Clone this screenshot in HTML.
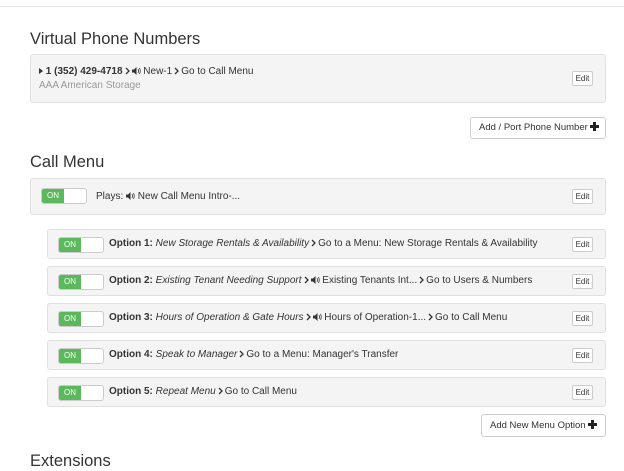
<!DOCTYPE html>
<html><head><meta charset="utf-8"><style>
*{box-sizing:border-box;margin:0;padding:0}
body{width:624px;height:459px;overflow:hidden;background:#fff;font-family:"Liberation Sans",sans-serif;color:#333;position:relative;font-size:10px}
.abs{position:absolute}
.h{position:absolute;left:30px;font-size:16.5px;color:#333}
.box{position:absolute;background:#f4f4f4;border:1px solid #e0e0e0;border-radius:3px}
.edit{position:absolute;right:12px;width:21px;height:15px;border:1px solid #ccc;background:#fff;border-radius:2px;font-size:8px;text-align:center;line-height:13px;color:#333}
.btn{position:absolute;border:1px solid #ccc;background:#fff;border-radius:3px;font-size:9.5px;color:#333;line-height:20px;padding-left:8px;white-space:nowrap}
.tog{position:absolute;width:46px;height:16px;border:1px solid #ccc;border-radius:3px;background:#fff;overflow:hidden}
.tog span{position:absolute;left:0;top:0;width:22px;height:14px;background:#5cb85c;color:#fff;font-size:8px;line-height:14px;text-align:center}
.txt{position:absolute;white-space:nowrap;font-size:10px}
.plus{display:inline-block;position:relative;width:9px;height:9px;vertical-align:-1px;margin-left:2px}
.plus:before{content:"";position:absolute;left:3px;top:0;width:3px;height:9px;background:#222}
.plus:after{content:"";position:absolute;left:0;top:3px;width:9px;height:3px;background:#222}
.spk{display:inline-block;width:9px;height:8px;vertical-align:-1px}
.gt{display:inline-block;width:5px;height:8px;vertical-align:-1px;margin:0 2px}
</style></head><body>
<div class="abs" style="left:0;top:6px;width:624px;height:1px;background:#e6e6e6"></div>
<div class="h" style="top:30px">Virtual Phone Numbers</div>
<div class="box" style="left:30px;top:54px;width:576px;height:49px">
 <div class="txt" style="left:8px;top:11px"><svg width="4" height="6" style="vertical-align:0"><path d="M0 0L4 3L0 6Z" fill="#333"/></svg> <b>1 (352) 429-4718</b><svg class="gt" viewBox="0 0 5 8"><path d="M1 1L4 4L1 7" stroke="#333" stroke-width="1.3" fill="none"/></svg><svg class="spk" viewBox="0 0 9 8"><path d="M0 2.5H2L4.5 0V8L2 5.5H0Z" fill="#333"/><path d="M6 2Q7 4 6 6M7.5 1Q9 4 7.5 7" stroke="#333" stroke-width=".8" fill="none"/></svg> New-1<svg class="gt" viewBox="0 0 5 8"><path d="M1 1L4 4L1 7" stroke="#333" stroke-width="1.3" fill="none"/></svg>Go to Call Menu</div>
 <div class="txt" style="left:8px;top:25px;color:#999">AAA American Storage</div>
 <div class="edit" style="top:16px">Edit</div>
</div>
<div class="btn" style="left:470px;top:117px;width:136px;height:22px">Add / Port Phone Number<span class="plus"></span></div>
<div class="h" style="top:153px">Call Menu</div>
<div class="box" style="left:30px;top:178px;width:576px;height:37px">
 <div class="tog" style="left:10px;top:9px"><span>ON</span></div>
 <div class="txt" style="left:65px;top:12px">Plays: <svg class="spk" viewBox="0 0 9 8"><path d="M0 2.5H2L4.5 0V8L2 5.5H0Z" fill="#333"/><path d="M6 2Q7 4 6 6M7.5 1Q9 4 7.5 7" stroke="#333" stroke-width=".8" fill="none"/></svg> New Call Menu Intro-...</div>
 <div class="edit" style="top:10px">Edit</div>
</div>

<div class="box" style="left:47px;top:229px;width:559px;height:30px">
 <div class="tog" style="left:10px;top:7px"><span>ON</span></div>
 <div class="txt" style="left:61px;top:8px"><b>Option 1:</b> <i>New Storage Rentals &amp; Availability</i><svg class="gt" viewBox="0 0 5 8"><path d="M1 1L4 4L1 7" stroke="#333" stroke-width="1.3" fill="none"/></svg>Go to a Menu: New Storage Rentals &amp; Availability</div>
 <div class="edit" style="top:7px">Edit</div>
</div>
<div class="box" style="left:47px;top:266px;width:559px;height:30px">
 <div class="tog" style="left:10px;top:7px"><span>ON</span></div>
 <div class="txt" style="left:61px;top:8px"><b>Option 2:</b> <i>Existing Tenant Needing Support</i><svg class="gt" viewBox="0 0 5 8"><path d="M1 1L4 4L1 7" stroke="#333" stroke-width="1.3" fill="none"/></svg><svg class="spk" viewBox="0 0 9 8"><path d="M0 2.5H2L4.5 0V8L2 5.5H0Z" fill="#333"/><path d="M6 2Q7 4 6 6M7.5 1Q9 4 7.5 7" stroke="#333" stroke-width=".8" fill="none"/></svg> Existing Tenants Int...<svg class="gt" viewBox="0 0 5 8"><path d="M1 1L4 4L1 7" stroke="#333" stroke-width="1.3" fill="none"/></svg>Go to Users &amp; Numbers</div>
 <div class="edit" style="top:7px">Edit</div>
</div>
<div class="box" style="left:47px;top:303px;width:559px;height:30px">
 <div class="tog" style="left:10px;top:7px"><span>ON</span></div>
 <div class="txt" style="left:61px;top:8px"><b>Option 3:</b> <i>Hours of Operation &amp; Gate Hours</i><svg class="gt" viewBox="0 0 5 8"><path d="M1 1L4 4L1 7" stroke="#333" stroke-width="1.3" fill="none"/></svg><svg class="spk" viewBox="0 0 9 8"><path d="M0 2.5H2L4.5 0V8L2 5.5H0Z" fill="#333"/><path d="M6 2Q7 4 6 6M7.5 1Q9 4 7.5 7" stroke="#333" stroke-width=".8" fill="none"/></svg> Hours of Operation-1...<svg class="gt" viewBox="0 0 5 8"><path d="M1 1L4 4L1 7" stroke="#333" stroke-width="1.3" fill="none"/></svg>Go to Call Menu</div>
 <div class="edit" style="top:7px">Edit</div>
</div>
<div class="box" style="left:47px;top:340px;width:559px;height:30px">
 <div class="tog" style="left:10px;top:7px"><span>ON</span></div>
 <div class="txt" style="left:61px;top:8px"><b>Option 4:</b> <i>Speak to Manager</i><svg class="gt" viewBox="0 0 5 8"><path d="M1 1L4 4L1 7" stroke="#333" stroke-width="1.3" fill="none"/></svg>Go to a Menu: Manager's Transfer</div>
 <div class="edit" style="top:7px">Edit</div>
</div>
<div class="box" style="left:47px;top:377px;width:559px;height:30px">
 <div class="tog" style="left:10px;top:7px"><span>ON</span></div>
 <div class="txt" style="left:61px;top:8px"><b>Option 5:</b> <i>Repeat Menu</i><svg class="gt" viewBox="0 0 5 8"><path d="M1 1L4 4L1 7" stroke="#333" stroke-width="1.3" fill="none"/></svg>Go to Call Menu</div>
 <div class="edit" style="top:7px">Edit</div>
</div>
<div class="btn" style="left:481px;top:414px;width:125px;height:23px;line-height:21px">Add New Menu Option<span class="plus"></span></div>
<div class="h" style="top:452px">Extensions</div>
</body></html>
